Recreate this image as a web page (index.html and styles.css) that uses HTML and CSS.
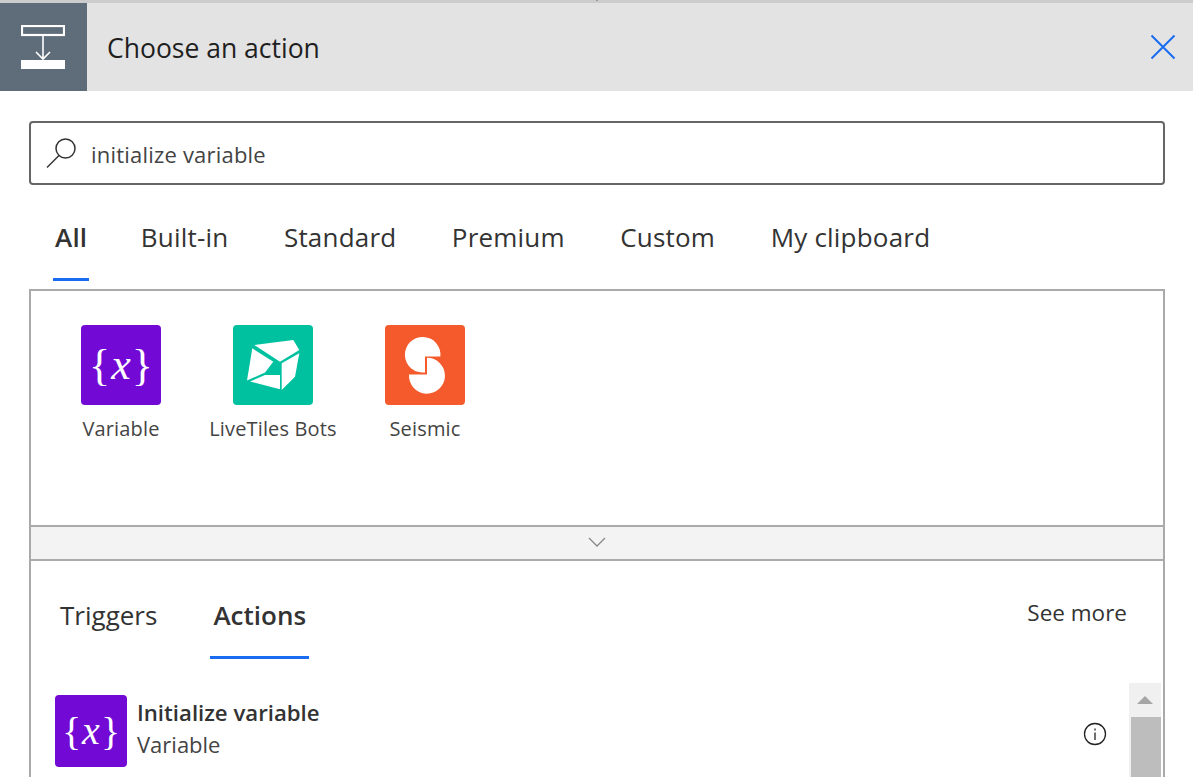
FILE: index.html
```html
<!DOCTYPE html>
<html lang="en">
<head>
    <meta charset="UTF-8">
    <meta name="viewport" content="width=device-width, initial-scale=1.0">
    <title>Choose an action</title>
    <link rel="stylesheet" href="styles.css">
</head>
<body>
    <div class="top-tick"></div>
    <div class="page">
        <div class="header">
            <div class="header-icon">
                <svg width="44" height="44" viewBox="0 0 44 44">
                    <rect x="1" y="1" width="42" height="9" fill="none" stroke="#fff" stroke-width="2.2"/>
                    <path d="M22 11V33M15 27L22 34L29 27" fill="none" stroke="#fff" stroke-width="1.6"/>
                    <rect x="0" y="35" width="44" height="9" fill="#fff"/>
                </svg>
            </div>
            <div class="header-title">Choose an action</div>
            <button class="close-btn">
                <svg width="26" height="26" viewBox="0 0 26 26">
                    <path d="M1.5 1.5L24.5 24.5M24.5 1.5L1.5 24.5" stroke="#1a6cf0" stroke-width="2" fill="none"/>
                </svg>
            </button>
        </div>

        <div class="search">
            <svg width="32" height="32" viewBox="0 0 32 32">
                <circle cx="19.5" cy="11.5" r="9.5" fill="none" stroke="#333" stroke-width="1.5"/>
                <path d="M13 18.5L1 30.5" stroke="#333" stroke-width="1.5" fill="none"/>
            </svg>
            <span class="search-text">initialize variable</span>
        </div>

        <div class="tabs">
            <div class="tab active">All</div>
            <div class="tab">Built-in</div>
            <div class="tab">Standard</div>
            <div class="tab">Premium</div>
            <div class="tab">Custom</div>
            <div class="tab">My clipboard</div>
        </div>

        <div class="panel">
            <div class="connectors">
                <div class="connector">
                    <div class="tile tile-purple"><span class="brace">{</span><span class="var-x">x</span><span class="brace">}</span></div>
                    <div class="connector-name">Variable</div>
                </div>
                <div class="connector">
                    <div class="tile tile-green">
                        <svg width="80" height="80" viewBox="0 0 80 80">
                            <path d="M21.300 20L60.300 15L66.300 25L47 36.700Z" fill="#fff"/>
                            <path d="M19.300 23.300L40.300 36.700L32 47.500L14 55.500Z" fill="#fff"/>
                            <path d="M66.300 28.300L62 51.700L48.700 65L48.700 38.300Z" fill="#fff"/>
                            <path d="M17 56.500L32 50L47 50L47 64.300Z" fill="#fff"/>
                        </svg>
                    </div>
                    <div class="connector-name">LiveTiles Bots</div>
                </div>
                <div class="connector">
                    <div class="tile tile-orange">
                        <svg width="80" height="80" viewBox="0 0 80 80">
                            <path d="M55.400 31.500A17.800 17.800 0 1 0 40 47.400V31.500Z" fill="#fff"/>
                            <path d="M24 49.500A18 18 0 1 0 42 32.700V49.500Z" fill="#fff"/>
                        </svg>
                    </div>
                    <div class="connector-name">Seismic</div>
                </div>
            </div>
            <div class="collapse-bar">
                <svg width="18" height="10" viewBox="0 0 18 10">
                    <path d="M1 1L9 9L17 1" fill="none" stroke="#888" stroke-width="1.3"/>
                </svg>
            </div>
            <div class="results">
                <div class="results-head">
                    <div class="sub-tab">Triggers</div>
                    <div class="sub-tab active">Actions</div>
                    <div class="see-more">See more</div>
                </div>
                <div class="result-row">
                    <div class="tile-small tile-purple"><span class="brace">{</span><span class="var-x">x</span><span class="brace">}</span></div>
                    <div class="result-text">
                        <div class="result-name">Initialize variable</div>
                        <div class="result-source">Variable</div>
                    </div>
                    <div class="info-icon">
                        <svg width="24" height="24" viewBox="0 0 24 24">
                            <circle cx="12" cy="12" r="10.500" fill="none" stroke="#222" stroke-width="1.300"/>
                            <path d="M12 10.500V18M12 6.500V8.500" stroke="#222" stroke-width="1.300" fill="none"/>
                        </svg>
                    </div>
                    <div class="scrollbar">
                        <div class="scroll-up"></div>
                        <div class="scroll-thumb"></div>
                    </div>
                </div>
            </div>
        </div>
    </div>
</body>
</html>
```

FILE: styles.css
```css
html, body {
    margin: 0;
    height: 100%;
    overflow: hidden;
    background-color: white;
}
.top-tick {
    position: absolute;
    top: 0;
    left: 596px;
    width: 2px;
    height: 1px;
    background-color: #999;
}
.page {
    height: 777px;
    overflow: hidden;
    font-family: "Open Sans", "Noto Sans", sans-serif;
    color: #333;
    border-top: 3px solid #ccc;
    box-sizing: border-box;
}
.header {
    display: flex;
    align-items: center;
    height: 88px;
    background-color: #e3e3e3;
}
.header-icon {
    display: flex;
    justify-content: center;
    align-items: center;
    width: 87px;
    height: 88px;
    padding-right: 1px;
    box-sizing: border-box;
    background-color: #5f6d7a;
}
.header-title {
    flex: 1;
    margin-left: 20px;
    padding-top: 2px;
    font-size: 26.5px;
    color: #1f1f1f;
}
.close-btn {
    display: flex;
    margin-right: 17px;
    padding: 0;
    border: none;
    background: none;
}
.search {
    display: flex;
    align-items: center;
    gap: 13px;
    height: 64px;
    margin: 30px 28px 0 29px;
    padding-left: 15px;
    border: 2px solid #666;
    border-radius: 4px;
    box-sizing: border-box;
    font-size: 22px;
    letter-spacing: 0.2px;
    color: #444;
}
.search-text {
    padding-top: 2px;
}
.tabs {
    display: flex;
    gap: 51.5px;
    height: 104px;
    margin-left: 53px;
}
.tab {
    display: flex;
    align-items: center;
    height: 96px;
    padding: 10px 2px 0;
    font-size: 26px;
    letter-spacing: 0.2px;
    border-bottom: 3px solid transparent;
    box-sizing: border-box;
}
.tab.active {
    margin-right: -2px;
    font-weight: 600;
    border-bottom-color: #1a6cf0;
}
.panel {
    margin: 0 28px 0 29px;
    border: 2px solid #aaa;
    border-bottom: none;
}
.connectors {
    display: flex;
    gap: 24px;
    height: 234px;
    padding: 34px 0 0 50px;
    box-sizing: border-box;
}
.connector {
    display: flex;
    flex-direction: column;
    align-items: center;
    gap: 10px;
    width: 128px;
    margin-left: -24px;
    margin-right: 24px;
}
.tile, .tile-small {
    display: flex;
    justify-content: center;
    align-items: center;
    width: 80px;
    height: 80px;
    border-radius: 4px;
    color: white;
}
.tile-small {
    flex-shrink: 0;
    width: 72px;
    height: 72px;
}
.tile-purple {
    background-color: #7209d4;
}
.tile-green {
    background-color: #00c19f;
}
.tile-orange {
    background-color: #f55a2c;
}
.brace {
    font-family: "Liberation Serif", serif;
    font-size: 44px;
    font-weight: 400;
}
.var-x {
    margin: 0 1px;
    font-family: "Liberation Serif", serif;
    font-size: 44px;
    font-style: italic;
    line-height: 1;
}
.tile-small .brace {
    font-size: 40px;
}
.tile-small .var-x {
    font-size: 40px;
}
.connector-name {
    font-size: 20px;
    letter-spacing: 0.15px;
    color: #444;
    white-space: nowrap;
}
.collapse-bar {
    display: flex;
    justify-content: center;
    align-items: center;
    height: 30px;
    padding-bottom: 2px;
    background-color: #f3f3f3;
    border-top: 2px solid #aaa;
    border-bottom: 2px solid #aaa;
}
.results {
    position: relative;
}
.results-head {
    display: flex;
    align-items: center;
    height: 98px;
    padding-left: 26px;
}
.sub-tab {
    display: flex;
    align-items: center;
    height: 98px;
    padding: 12px 3px 0;
    font-size: 26px;
    box-sizing: border-box;
    border-bottom: 3px solid transparent;
}
.sub-tab.active {
    margin-left: 50px;
    font-weight: 600;
    border-bottom-color: #1a6cf0;
}
.see-more {
    margin-left: auto;
    margin-right: 36px;
    margin-top: 5px;
    font-size: 22.5px;
}
.result-row {
    display: flex;
    align-items: flex-start;
    padding: 36px 0 30px 24px;
}
.result-text {
    flex: 1;
    margin-left: 10px;
    margin-top: 2px;
}
.result-name {
    font-size: 22.2px;
    font-weight: 600;
}
.result-source {
    margin-top: 1px;
    font-size: 22px;
    color: #444;
}
.info-icon {
    position: absolute;
    top: 161px;
    right: 56px;
}
.scrollbar {
    position: absolute;
    top: 122px;
    right: 2px;
    width: 32px;
    height: 94px;
    background-color: #f0f0f0;
}
.scroll-up {
    width: 0;
    height: 0;
    margin: 13px auto 0;
    border-left: 8px solid transparent;
    border-right: 8px solid transparent;
    border-bottom: 8px solid #a6a6a6;
}
.scroll-thumb {
    width: 30px;
    height: 60px;
    margin: 13px 0 0 2px;
    background-color: #bdbdbd;
}
```
